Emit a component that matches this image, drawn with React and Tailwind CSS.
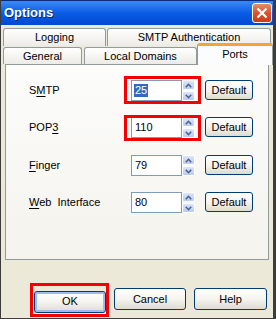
import React from "react";

const Arrow = ({ up }) => (
  <svg width="7" height="5" viewBox="0 0 7 5">
    <path
      d={up ? "M0.8 4.2 L3.5 1.3 L6.2 4.2" : "M0.8 0.8 L3.5 3.7 L6.2 0.8"}
      fill="none"
      stroke="#4d6185"
      strokeWidth="1.6"
    />
  </svg>
);

const Spinner = () => (
  <div className="flex flex-col w-[13px] h-[21px] gap-px">
    <div className="flex-1 flex items-center justify-center rounded-[2px] border border-white bg-linear-to-b from-[#dbe5fb] to-[#b9cbf3]">
      <Arrow up />
    </div>
    <div className="flex-1 flex items-center justify-center rounded-[2px] border border-white bg-linear-to-b from-[#dbe5fb] to-[#b9cbf3]">
      <Arrow />
    </div>
  </div>
);

const XpButton = ({ children, className = "" }) => (
  <button
    className={`rounded-[3px] border border-[#003c74] bg-linear-to-b from-white via-[#f5f4ef] to-[#dedbcf] text-[11px] text-black leading-none ${className}`}
  >
    {children}
  </button>
);

const PortRow = ({ label, value, selected, redBox, className = "" }) => (
  <div className={`flex items-start h-[21px] ${className}`}>
    <div className="w-[102px] leading-[21px] text-[11px] text-black">{label}</div>
    <div className="relative flex">
      <div className="w-[51px] h-[21px] border border-[#7f9db9] bg-white flex items-center pl-[2px] text-[11px]">
        {selected ? (
          <span className="bg-[#316ac5] text-white px-px leading-[13px]">{value}</span>
        ) : (
          <span className="px-px">{value}</span>
        )}
      </div>
      <Spinner />
      {redBox && <div className={`absolute border-[3px] border-[#f50000] ${redBox}`} />}
    </div>
    <XpButton className="ml-[10px] w-[48px] h-[20px]">Default</XpButton>
  </div>
);

const Tab = ({ children, className = "" }) => (
  <div
    className={`flex items-center justify-center border border-b-0 border-[#919b9c] rounded-t-[3px] bg-linear-to-b from-white to-[#ecebe6] text-[11px] text-black ${className}`}
  >
    {children}
  </div>
);

export default function App() {
  return (
    <div className="w-[276px] h-[319px] flex flex-col bg-[#ece9d8] border-l border-r-[3px] border-b border-[#3c3c3c] font-['Liberation_Sans',Arial,sans-serif] overflow-hidden">
      {/* title bar */}
      <div className="h-[25px] flex items-center justify-between border-t border-[#0a2a7a] bg-linear-to-b from-[#3b8af5] via-[#0a5ce6] to-[#0347d2] pl-[3px] pr-px">
        <span className="text-white font-bold text-[13px] [text-shadow:1px_1px_0_#0a2a6a]">Options</span>
        <div className="w-[20px] h-[20px] rounded-[3px] border border-white bg-linear-to-b from-[#e8896a] via-[#d9542c] to-[#c23f17] flex items-center justify-center">
          <svg width="12" height="12" viewBox="0 0 12 12">
            <path d="M1.5 1.5 L10.5 10.5 M10.5 1.5 L1.5 10.5" stroke="white" strokeWidth="2.2" />
          </svg>
        </div>
      </div>

      {/* tabs */}
      <div className="mt-[3px] flex h-[18px] pl-[2px]">
        <Tab className="w-[103px]">Logging</Tab>
        <Tab className="ml-px w-[164px]">SMTP Authentication</Tab>
      </div>
      <div className="flex items-end h-[18px] pl-[2px]">
        <Tab className="w-[79px] h-[17px]">General</Tab>
        <Tab className="ml-[2px] w-[113px] h-[17px]">Local Domains</Tab>
        <div className="relative z-10 -mb-px w-[76px] h-[22px] flex items-center justify-center border-x border-[#919b9c] border-t-[3px] border-t-[#f2a33a] rounded-t-[3px] bg-[#fcfcfe] text-[11px] text-black pb-[3px]">
          Ports
        </div>
      </div>

      {/* panel */}
      <div className="ml-[4px] w-[264px] h-[196px] border border-[#919b9c] bg-linear-to-b from-[#fcfcfb] to-[#f4f3ed] pt-[15px] pl-[23px] flex flex-col gap-4">
        <PortRow
          label={<>S<u className="underline-offset-2">M</u>TP</>}
          value="25"
          selected
          redBox="-left-[7px] -right-[6px] -top-[4px] -bottom-[3px]"
        />
        <PortRow
          label={<>POP<u className="underline-offset-2">3</u></>}
          value="110"
          redBox="-left-[7px] -right-[6px] -top-[2px] -bottom-[3px]"
        />
        <PortRow label={<><u className="underline-offset-2">F</u>inger</>} value="79" className="mt-px" />
        <PortRow label={<><u className="underline-offset-2">W</u>eb&nbsp; Interface</>} value="80" />
      </div>

      {/* buttons */}
      <div className="mt-[28px] flex justify-end gap-2 pr-[6px]">
        <div className="relative">
          <XpButton className="w-[72px] h-[22px] shadow-[inset_0_0_0_2px_#9cbcf0]">OK</XpButton>
          <div className="absolute -left-[4px] -right-[3px] -top-[5px] -bottom-[4px] border-[3px] border-[#f50000]" />
        </div>
        <XpButton className="w-[72px] h-[22px]">Cancel</XpButton>
        <XpButton className="w-[73px] h-[22px]">Help</XpButton>
      </div>
    </div>
  );
}
